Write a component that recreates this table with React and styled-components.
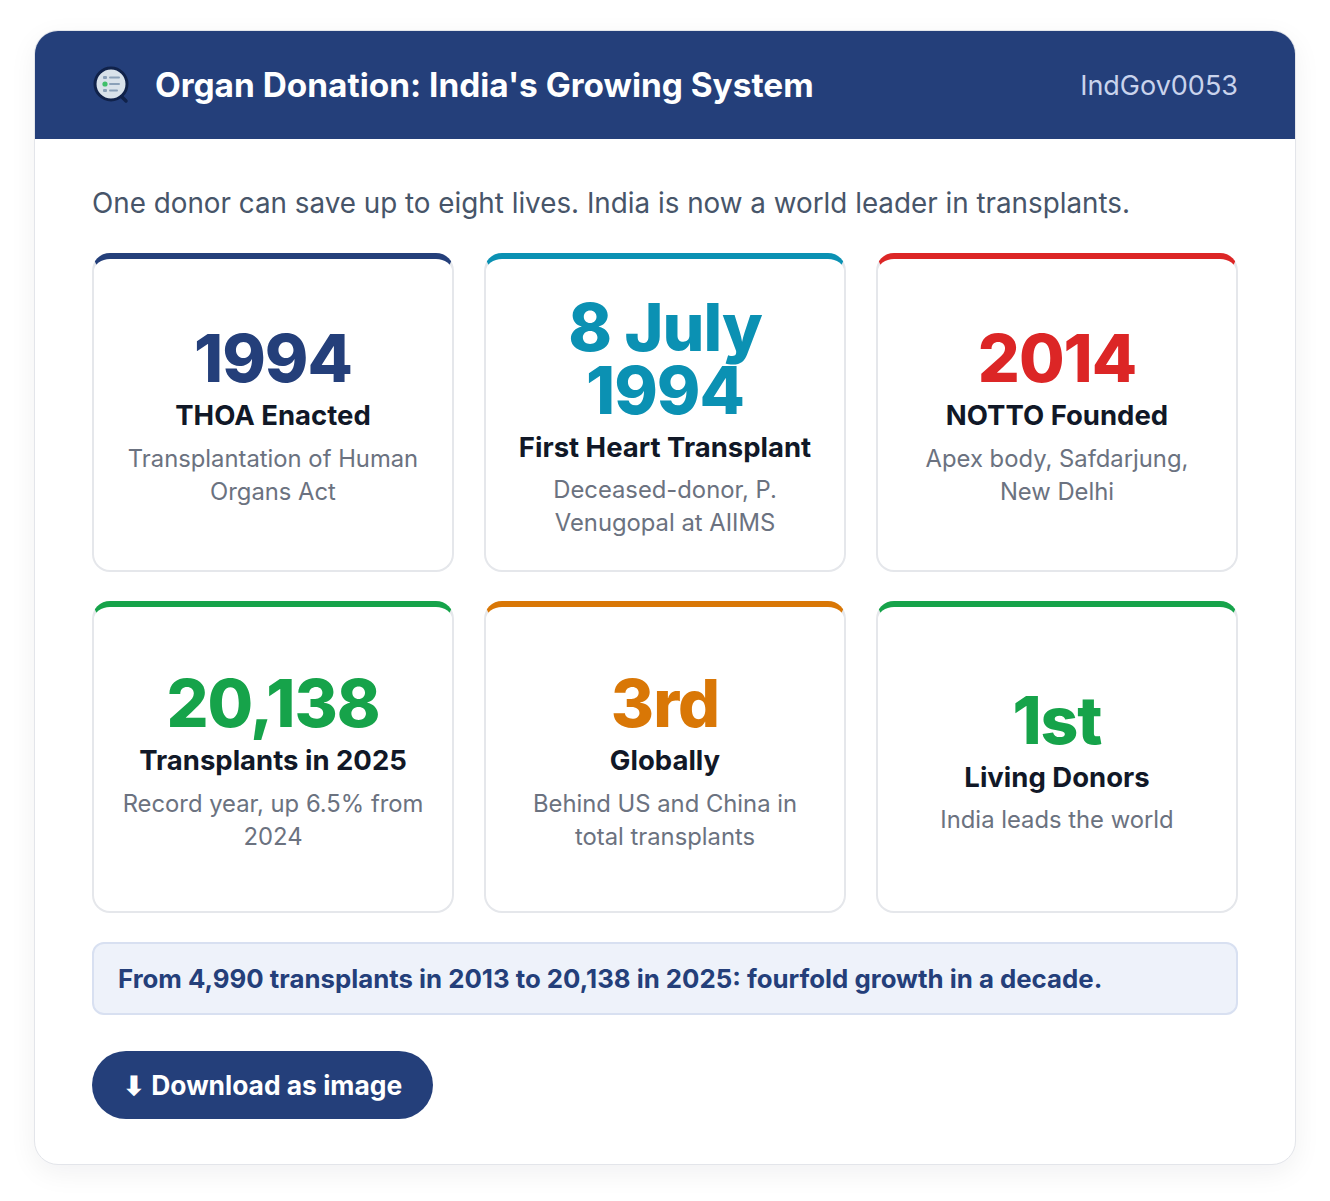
import React from "react";
import styled, { createGlobalStyle } from "styled-components";

const GlobalStyle = createGlobalStyle`
  * { box-sizing: border-box; }
  body {
    margin: 0;
    background: #ffffff;
    font-family: Inter, "Noto Sans", "Liberation Sans", sans-serif;
  }
`;

const Page = styled.div`
  padding: 30px 34px 38px;
`;

const Panel = styled.div`
  background: #fff;
  border: 1px solid #e3e5ea;
  border-radius: 24px;
  overflow: hidden;
  box-shadow: 0 8px 28px rgba(15, 23, 42, 0.06);
`;

const Header = styled.header`
  height: 108px;
  background: #243f7a;
  display: flex;
  align-items: center;
  justify-content: space-between;
  padding: 0 57px 0 58px;
`;

const Brand = styled.div`
  display: flex;
  align-items: center;
  gap: 24px;
`;

const Title = styled.h1`
  margin: 0;
  color: #fff;
  font-size: 33.4px;
  font-weight: 700;
`;

const Code = styled.span`
  color: #c9d3ec;
  font-size: 27px;
  font-weight: 400;
`;

const Body = styled.div`
  padding: 44px 57px 45px;
`;

const Lead = styled.p`
  margin: 0 0 28px;
  color: #475569;
  font-size: 27.8px;
  line-height: 1.5;
`;

const Grid = styled.div`
  display: grid;
  grid-template-columns: repeat(3, 1fr);
  gap: 29px 30px;
`;

const Card = styled.div`
  min-height: 312px;
  border: 2px solid #e5e7eb;
  border-top: 6px solid ${(p) => p.$accent};
  border-radius: 18px;
  padding: 37px 24px 31px;
  display: flex;
  flex-direction: column;
  justify-content: center;
  align-items: center;
  text-align: center;
`;

const Big = styled.div`
  color: ${(p) => p.$accent};
  font-size: 66px;
  font-weight: 800;
  line-height: 63px;
  letter-spacing: -1px;
`;

const Label = styled.div`
  margin-top: 8px;
  color: #111827;
  font-size: 27.5px;
  font-weight: 700;
  line-height: 1.3;
`;

const Note = styled.div`
  margin-top: 8px;
  color: #6b7280;
  font-size: 23.8px;
  line-height: 33px;
`;

const Callout = styled.div`
  margin-top: 29px;
  background: #eef2fa;
  border: 2px solid #d8e0f1;
  border-radius: 12px;
  padding: 0 24px;
  height: 73px;
  display: flex;
  align-items: center;
  color: #243f7a;
  font-size: 25.8px;
  font-weight: 700;
`;

const DownloadButton = styled.button`
  margin-top: 36px;
  height: 68px;
  padding: 0 31px;
  border: none;
  border-radius: 34px;
  background: #243f7a;
  color: #fff;
  font-family: inherit;
  font-size: 26.4px;
  font-weight: 700;
  display: inline-flex;
  align-items: center;
  gap: 8px;
  cursor: pointer;
`;

const Logo = () => (
  <svg width="38" height="38" viewBox="0 0 38 38">
    <path d="M27 29 L33 35" stroke="#10224a" strokeWidth="3.5" strokeLinecap="round" />
    <circle cx="18" cy="18" r="16" fill="#d9e2ea" stroke="#10224a" strokeWidth="3" />
    <rect x="10" y="10" width="4" height="3" rx="1" fill="#8aa0b8" />
    <rect x="16" y="10.5" width="11" height="2" rx="1" fill="#8aa0b8" />
    <circle cx="12" cy="18" r="2.6" fill="#3fbf6a" />
    <rect x="16" y="17" width="11" height="2" rx="1" fill="#8aa0b8" />
    <rect x="10" y="23" width="4" height="3" rx="1" fill="#8aa0b8" />
    <rect x="16" y="23.5" width="9" height="2" rx="1" fill="#8aa0b8" />
  </svg>
);

const stats = [
  { value: "1994", label: "THOA Enacted", note: "Transplantation of Human Organs Act", accent: "#243f7a" },
  { value: "8 July 1994", label: "First Heart Transplant", note: "Deceased-donor, P. Venugopal at AIIMS", accent: "#0b91b3" },
  { value: "2014", label: "NOTTO Founded", note: "Apex body, Safdarjung, New Delhi", accent: "#dc2626" },
  { value: "20,138", label: "Transplants in 2025", note: "Record year, up 6.5% from 2024", accent: "#16a34a" },
  { value: "3rd", label: "Globally", note: "Behind US and China in total transplants", accent: "#d97706" },
  { value: "1st", label: "Living Donors", note: "India leads the world", accent: "#16a34a" },
];

export default function App() {
  return (
    <Page>
      <GlobalStyle />
      <Panel>
        <Header>
          <Brand>
            <Logo />
            <Title>Organ Donation: India's Growing System</Title>
          </Brand>
          <Code>IndGov0053</Code>
        </Header>
        <Body>
          <Lead>One donor can save up to eight lives. India is now a world leader in transplants.</Lead>
          <Grid>
            {stats.map((s) => (
              <Card key={s.label} $accent={s.accent}>
                <Big $accent={s.accent}>{s.value}</Big>
                <Label>{s.label}</Label>
                <Note>{s.note}</Note>
              </Card>
            ))}
          </Grid>
          <Callout>From 4,990 transplants in 2013 to 20,138 in 2025: fourfold growth in a decade.</Callout>
          <DownloadButton>⬇ Download as image</DownloadButton>
        </Body>
      </Panel>
    </Page>
  );
}
